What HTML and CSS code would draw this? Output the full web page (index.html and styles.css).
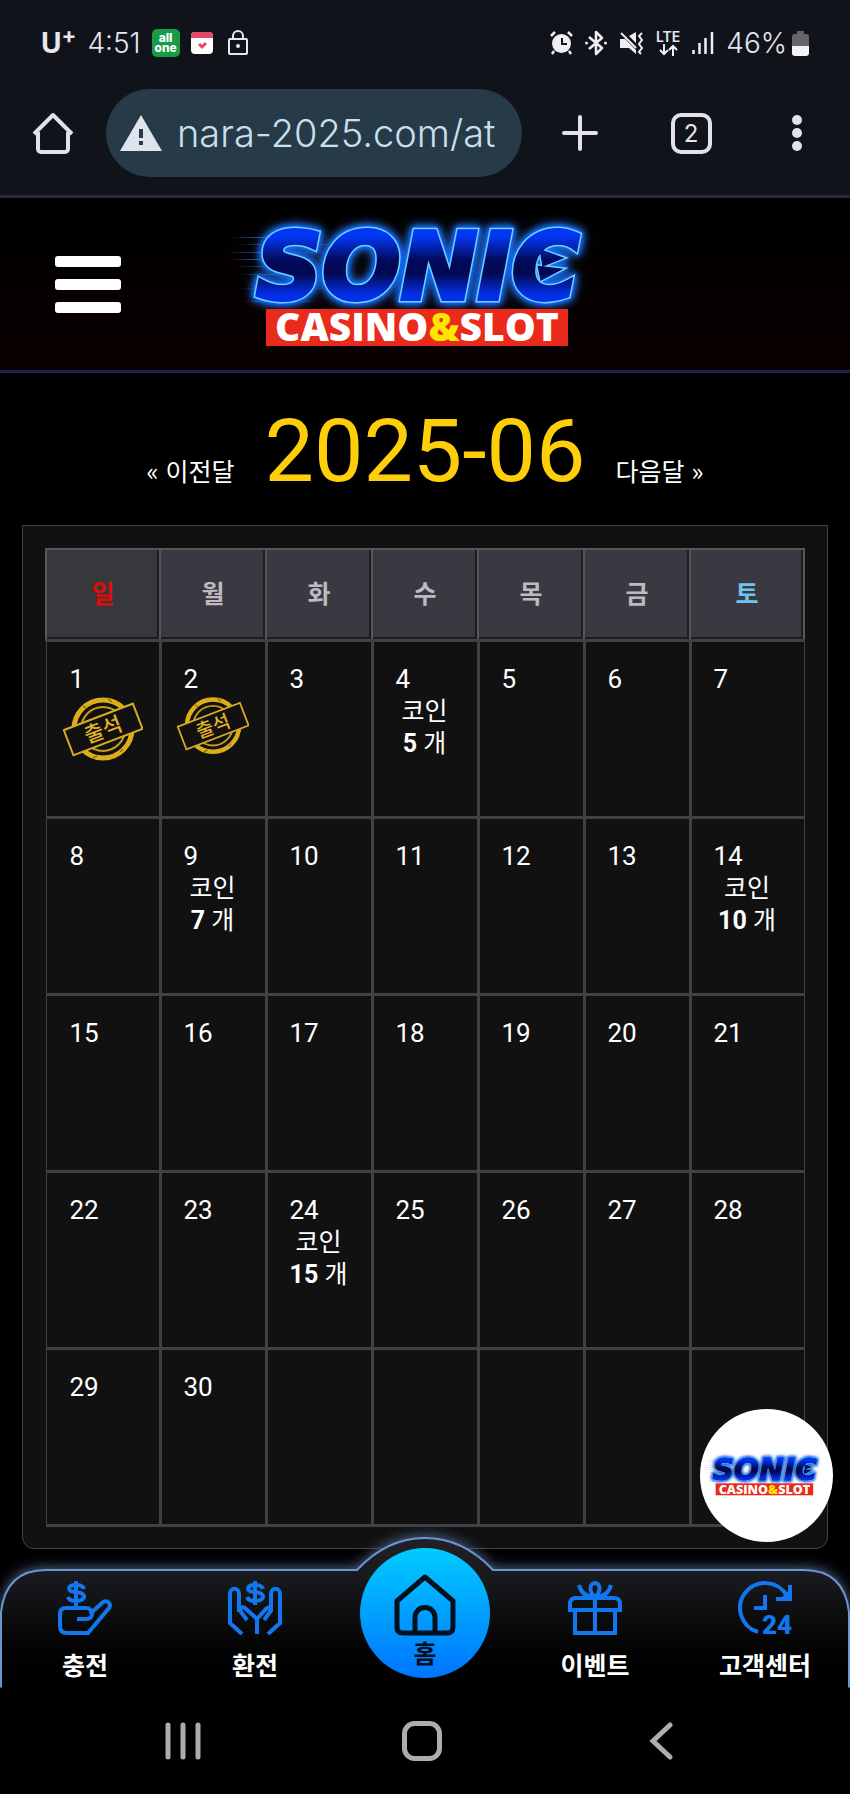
FILE: index.html
```html
<!DOCTYPE html>
<html lang="ko">
  <head>
    <meta charset="UTF-8" />
    <meta name="viewport" content="width=device-width, initial-scale=1.0" />
    <link rel="stylesheet" href="styles.css">
    <title>SONIC CASINO&amp;SLOT</title>
  </head>
  <body>
    <div class="browser">
      <div class="status">
        <div class="status-left">
          <span class="carrier">U<sup>+</sup></span>
          <span class="clock">4:51</span>
          <span class="allone">all<br>one</span>
          <svg class="cal" viewBox="0 0 22 22"><rect width="22" height="22" rx="4" fill="#fff"/><path d="M0 6V4a4 4 0 0 1 4-4h14a4 4 0 0 1 4 4v2z" fill="#e04a66"/><path d="M8 12l3 3 4-4" fill="none" stroke="#e04a66" stroke-width="3"/></svg>
          <svg class="lock" viewBox="0 0 20 26"><rect x="1" y="9" width="18" height="15" rx="1" fill="none" stroke="#e6e6ee" stroke-width="2"/><path d="M5 9V6a5 5 0 0 1 10 0v3" fill="none" stroke="#e6e6ee" stroke-width="2"/><circle cx="10" cy="16" r="2" fill="#e6e6ee"/></svg>
        </div>
        <div class="status-right">
          <svg width="23" height="24" viewBox="0 0 23 24"><circle cx="11.500" cy="12.500" r="9.500" fill="#eeeef4"/><path d="M1 5l4-4M22 5l-4-4M4 20l-2 3M19 20l2 3" stroke="#eeeef4" stroke-width="2.500"/><path d="M12 7v6h5" fill="none" stroke="#11131b" stroke-width="2"/></svg>
          <svg width="22" height="26" viewBox="0 0 22 26"><path d="M4 7l13 11-6 6V2l6 6L4 19" fill="none" stroke="#eeeef4" stroke-width="2.500" stroke-linejoin="round"/><circle cx="1.500" cy="13" r="1.500" fill="#eeeef4"/><circle cx="20.500" cy="13" r="1.500" fill="#eeeef4"/></svg>
          <svg width="25" height="24" viewBox="0 0 25 24"><path d="M1 8h5l11 11v4l-7-6H1zM10 5l7-4v11z" fill="#eeeef4"/><path d="M2 2l15 15" stroke="#eeeef4" stroke-width="2"/><path d="M23 2l-3 3 3 4-3 4 3 4-3 4 2 2" fill="none" stroke="#eeeef4" stroke-width="2"/></svg>
          <span class="lte">LTE<svg width="20" height="12" viewBox="0 0 20 12"><path d="M6 0v10M2 6l4 4 4-4M15 12V2M11 6l4-4 4 4" fill="none" stroke="#eeeef4" stroke-width="2"/></svg></span>
          <svg width="22" height="24" viewBox="0 0 22 24"><path d="M1.500 23v-4M7.500 23V12M13.500 23V7M20 23V1" stroke="#eeeef4" stroke-width="2.500"/></svg>
          <span class="battery">
            <span class="percent">46%</span>
            <svg width="17" height="26" viewBox="0 0 17 26"><path d="M5 1h7v3h2a3 3 0 0 1 3 3v9H0V7a3 3 0 0 1 3-3h2z" fill="#66666a"/><path d="M0 16h17v7a3 3 0 0 1-3 3H3a3 3 0 0 1-3-3z" fill="#f4f4f8"/></svg>
          </span>
        </div>
      </div>

      <div class="toolbar">
        <button class="tool" aria-label="Home"><svg width="42" height="42" viewBox="0 0 42 42"><path d="M2 22L21 3l19 19M6 20v17a3 3 0 0 0 3 3h24a3 3 0 0 0 3-3V20" fill="none" stroke="#e2e1ea" stroke-width="4" stroke-linejoin="round"/></svg></button>
        <label class="address">
          <svg width="42" height="36" viewBox="0 0 42 36"><path d="M21 0l21 36H0z" fill="#dfe3ec"/><path d="M21 14v9M21 26v4" stroke="#263b47" stroke-width="4"/></svg>
          <input type="text" class="url" value="nara-2025.com/at" aria-label="URL">
        </label>
        <button class="tool wide" aria-label="New tab"><svg width="36" height="36" viewBox="0 0 36 36"><path d="M18 2v32M2 18h32" stroke="#e2e1ea" stroke-width="4" stroke-linecap="round"/></svg></button>
        <button class="tool"><span class="tabs">2</span></button>
        <button class="tool" aria-label="Menu"><svg width="10" height="38" viewBox="0 0 10 38"><g fill="#e2e1ea"><circle cx="5" cy="6" r="5"/><circle cx="5" cy="19" r="5"/><circle cx="5" cy="32" r="5"/></g></svg></button>
      </div>
    </div>

    <header class="header">
      <button class="hamburger" aria-label="Menu"><span></span><span></span><span></span></button>
      <a href="#" class="logo">
        <svg viewBox="10 0 390 145">
          <defs>
            <linearGradient id="blue" gradientUnits="userSpaceOnUse" x1="0" y1="18" x2="0" y2="90">
              <stop offset="0.100" stop-color="#0236f0"/>
              <stop offset="0.420" stop-color="#020a5c"/>
              <stop offset="0.600" stop-color="#020850"/>
              <stop offset="0.900" stop-color="#0230e8"/>
            </linearGradient>
            <linearGradient id="speed">
              <stop offset="0" stop-color="#2b58c8" stop-opacity="0"/>
              <stop offset="0.400" stop-color="#3a6ae0"/>
              <stop offset="1" stop-color="#3a6ae0" stop-opacity="0"/>
            </linearGradient>
            <g id="name">
              <text x="36" y="87" class="logo-name">SONIC</text>
              <path d="M322 40l17 6-15 6zM320 56l17 2-15 8z"/>
            </g>
          </defs>
          <g id="brand">
            <g fill="url(#speed)">
              <rect x="10" y="25" width="90" height="1"/>
              <rect x="14" y="32" width="120" height="1"/>
              <rect x="6" y="40" width="110" height="1"/>
              <rect x="8" y="47" width="90" height="1"/>
              <rect x="14" y="54" width="120" height="1"/>
              <rect x="18" y="62" width="90" height="1"/>
              <rect x="20" y="76" width="90" height="1"/>
              <rect x="22" y="89" width="80" height="1"/>
            </g>
            <use href="#name" class="logo-edge"/>
            <use href="#name" class="logo-face"/>
            <rect x="46" y="97" width="302" height="37" fill="#ea2a1b"/>
            <text x="197" y="129" class="logo-sub">CASINO<tspan fill="#ffe600">&amp;</tspan>SLOT</text>
          </g>
        </svg>
      </a>
    </header>

    <main class="attendance">
      <div class="month">
        <a href="#">« 이전달</a>
        <h1>2025-06</h1>
        <a href="#">다음달 »</a>
      </div>

      <div class="panel">
        <table class="calendar">
          <thead>
            <tr><th class="sun">일</th><th>월</th><th>화</th><th>수</th><th>목</th><th>금</th><th class="sat">토</th></tr>
          </thead>
          <tbody>
            <tr>
              <td>1
                <svg class="stamp" viewBox="0 0 80 66">
                  <g id="stamp">
                    <circle cx="40" cy="33" r="29" fill="none" stroke="#dcae1a" stroke-width="5"/>
                    <circle cx="40" cy="33" r="22" fill="none" stroke="#c79d1a" stroke-width="2"/>
                    <path d="M20 10l3 2M45 3l4 3M57 56l3-3M30 62l4-2M14 45l3-1" stroke="#5a4710" stroke-width="1"/>
                    <g transform="rotate(-21 40 33)">
                      <rect x="3" y="20" width="74" height="27" fill="#111112" stroke="#d6ab22" stroke-width="2"/>
                      <text x="40" y="41" class="stamp-text">출석</text>
                    </g>
                  </g>
                </svg>
              </td>
              <td>2
                <svg class="stamp" viewBox="0 0 80 66"><use href="#stamp"/></svg>
              </td>
              <td>3</td>
              <td>4<p class="coin">코인<br><b>5</b> 개</p></td>
              <td>5</td>
              <td>6</td>
              <td>7</td>
            </tr>
            <tr>
              <td>8</td>
              <td>9<p class="coin">코인<br><b>7</b> 개</p></td>
              <td>10</td>
              <td>11</td>
              <td>12</td>
              <td>13</td>
              <td>14<p class="coin">코인<br><b>10</b> 개</p></td>
            </tr>
            <tr><td>15</td><td>16</td><td>17</td><td>18</td><td>19</td><td>20</td><td>21</td></tr>
            <tr>
              <td>22</td>
              <td>23</td>
              <td>24<p class="coin">코인<br><b>15</b> 개</p></td>
              <td>25</td>
              <td>26</td>
              <td>27</td>
              <td>28</td>
            </tr>
            <tr><td>29</td><td>30</td><td></td><td></td><td></td><td></td><td></td></tr>
          </tbody>
        </table>
      </div>

      <a href="#" class="badge" aria-label="SONIC">
        <svg viewBox="10 0 390 145"><use href="#brand"/></svg>
      </a>
    </main>

    <nav class="tabbar">
      <svg class="tabbar-bg" viewBox="0 0 850 152" preserveAspectRatio="none">
        <defs>
          <linearGradient id="bar" x1="0" y1="0" x2="0" y2="1">
            <stop offset="0" stop-color="#202228"/>
            <stop offset="0.300" stop-color="#17181b"/>
            <stop offset="0.750" stop-color="#020203"/>
            <stop offset="1" stop-color="#000"/>
          </linearGradient>
        </defs>
        <path class="bar-shape" d="M1 152V76Q6 34 46 34H357Q387 2 425 2T493 34H804Q844 34 849 76V152" fill="url(#bar)" stroke="#6d94cf" stroke-width="2"/>
      </svg>
      <a href="#" class="tab">
        <svg width="54" height="54" viewBox="0 0 54 54"><path d="M26 8c-1-4-5-4-8-4-9 0-9 7-1 7 12 0 12 9 1 9-4 0-7-1-8-4M18 0v26M19 38h9c9 0 7-11 0-11H8q-6 0-6 6v12q0 7 7 7h21L51 27c3-5-3-9-7-5L32 33" fill="none" stroke="#1277ee" stroke-width="4"/></svg>
        충전
      </a>
      <a href="#" class="tab">
        <svg width="54" height="54" viewBox="0 0 54 54"><path d="M35 8c-1-4-5-4-8-4-9 0-9 7-1 7 12 0 12 9 1 9-4 0-7-1-8-4M27 0v24M29 53V38L17 27c-3-2-6 1-4 4l6 8M29 38l9-10c3-3 6 0 4 3l-6 8M14 53L2 42V13c0-7 9-7 9 0v18M40 53l12-11V13c0-7-9-7-9 0v18" fill="none" stroke="#1277ee" stroke-width="4"/></svg>
        환전
      </a>
      <a href="#" class="tab home">
        <svg width="62" height="64" viewBox="0 0 62 64"><path d="M3 28L31 4l28 24v26q0 6-6 6H9q-6 0-6-6zM21 60V45c0-14 20-14 20 0v15" fill="none" stroke="#04101c" stroke-width="5" stroke-linejoin="round"/></svg>
        홈
      </a>
      <a href="#" class="tab">
        <svg width="54" height="54" viewBox="0 0 54 54"><path d="M7 30v22h40V30M2 29v-6q0-6 6-6h38q6 0 6 6v6zM27 17v35M27 16c-7-6-5-14 0-14s7 8 0 14zM27 16c-9 0-14-4-16-12M27 16c9 0 14-4 16-12" fill="none" stroke="#1277ee" stroke-width="4"/></svg>
        이벤트
      </a>
      <a href="#" class="tab">
        <svg width="54" height="54" viewBox="0 0 54 54"><path d="M20 51A25 25 0 1 1 49 15M52 4v14H38M27 14v13H16" fill="none" stroke="#1277ee" stroke-width="4"/><path d="M52 8v10H42z" fill="#1277ee"/><text x="24" y="53" class="hours">24</text></svg>
        고객센터
      </a>
    </nav>

    <div class="system">
      <button aria-label="Recents"><svg width="36" height="38" viewBox="0 0 36 38"><path d="M3 3v32M18 3v32M33 3v32" stroke="#aeacb1" stroke-width="5" stroke-linecap="round"/></svg></button>
      <button aria-label="Home"><svg width="40" height="40" viewBox="0 0 40 40"><rect x="2.500" y="2.500" width="35" height="35" rx="10" fill="none" stroke="#aeacb1" stroke-width="5"/></svg></button>
      <button aria-label="Back"><svg width="24" height="38" viewBox="0 0 24 38"><path d="M21 3L4 19l17 16" fill="none" stroke="#aeacb1" stroke-width="5" stroke-linecap="round"/></svg></button>
    </div>
  </body>
</html>
```

FILE: styles.css
```css
* {
  margin: 0;
  padding: 0;
  box-sizing: border-box;
}

body {
  background-color: #000;
  color: #fff;
  font-family: Roboto, "Noto Sans CJK KR", sans-serif;
}
a {
  color: inherit;
  text-decoration: none;
}
button {
  background: none;
  border: 0;
  color: inherit;
}
svg {
  display: block;
}

/* browser bars */
.browser {
  background-color: #11131b;
  border-bottom: 3px solid #2b2c31;
  font-family: Inter, sans-serif;
  color: #e6e6ee;
}
.status {
  display: flex;
  justify-content: space-between;
  align-items: center;
  height: 86px;
  padding: 0 41px;
}
.status-left,
.status-right,
.battery {
  display: flex;
  align-items: center;
}
.status-left {
  gap: 11px;
}
.status-right {
  gap: 12px;
}
.battery {
  gap: 5px;
}
.carrier {
  font-size: 28px;
  line-height: 30px;
  font-weight: 700;
}
.carrier sup {
  font-size: 22px;
  line-height: 10px;
}
.clock,
.percent {
  font-size: 28px;
  line-height: 30px;
  font-weight: 300;
}
.allone {
  width: 28px;
  height: 28px;
  padding: 4px 0;
  border-radius: 5px;
  background-color: #199a45;
  color: #fff;
  font-size: 12px;
  line-height: 10px;
  font-weight: 800;
  text-align: center;
}
.cal {
  width: 22px;
  margin-right: 4px;
}
.lock {
  width: 20px;
}
.lte {
  font-size: 14px;
  line-height: 14px;
  font-weight: 600;
}
.lte svg {
  margin: 0 auto;
}
.toolbar {
  display: flex;
  align-items: center;
  height: 109px;
  padding-bottom: 15px;
}
.tool {
  display: flex;
  justify-content: center;
  align-items: center;
  width: 106px;
  height: 88px;
}
.wide {
  width: 116px;
}
.tabs {
  width: 41px;
  height: 41px;
  border: 4px solid #e2e1ea;
  border-radius: 10px;
  font-family: Inter, sans-serif;
  font-size: 24px;
  line-height: 33px;
}
.address {
  flex: 1;
  display: flex;
  align-items: center;
  gap: 15px;
  min-width: 0;
  height: 88px;
  padding: 0 14px;
  border-radius: 44px;
  background-color: #263b47;
}
.address svg {
  flex: none;
}
.url {
  flex: 1;
  min-width: 0;
  border: 0;
  outline: 0;
  background: none;
  color: #c9dfee;
  font-family: Inter, sans-serif;
  font-size: 38px;
  font-weight: 300;
}

/* site header */
.header {
  display: grid;
  grid-template-columns: 1fr 390px 1fr;
  align-items: center;
  height: 175px;
  border-bottom: 3px solid #1b2152;
  background: linear-gradient(#000, #0a0000);
}
.hamburger {
  display: grid;
  gap: 12px;
  width: 66px;
  margin-left: 55px;
}
.hamburger span {
  height: 11px;
  border-radius: 3px;
  background-color: #fff;
}
.logo svg,
.badge svg {
  overflow: visible;
}
.logo-name {
  font-family: "DejaVu Sans", sans-serif;
  font-size: 92px;
  font-weight: 700;
  font-style: italic;
}
.logo-edge {
  fill: #6fd0ff;
  stroke: #6fd0ff;
  stroke-width: 7px;
  filter: drop-shadow(0 0 2px #0a6cff) drop-shadow(0 0 3px #0a6cff) drop-shadow(0 0 5px #2a5dbb);
}
.logo-face {
  fill: url(#blue);
  stroke: url(#blue);
  stroke-width: 4px;
}
.logo-sub {
  font-family: "Open Sans", sans-serif;
  font-size: 39px;
  font-weight: 800;
  fill: #fff;
  text-anchor: middle;
}

/* calendar */
.attendance {
  position: relative;
  padding: 0 22px;
}
.month {
  display: flex;
  justify-content: center;
  align-items: baseline;
  gap: 30px;
  padding-top: 3px;
  font-family: "Noto Sans CJK KR", sans-serif;
  font-size: 25px;
}
.month h1 {
  color: #ffce0a;
  font-family: Roboto, sans-serif;
  font-size: 88px;
  line-height: 149px;
  font-weight: 400;
}
.panel {
  padding: 22px 22px 21px;
  border: 1px solid #444446;
  border-radius: 0 0 12px 12px;
  background-color: #111112;
}
.calendar {
  width: 100%;
  table-layout: fixed;
  border-collapse: collapse;
}
.calendar th {
  height: 91px;
  padding-bottom: 5px;
  border: 2px solid #56565b;
  background-color: #3a3841;
  box-shadow: inset -2px -2px 0 #1d1d20;
  color: #bdbac2;
  font-size: 25px;
  font-weight: 700;
}
.calendar th:first-child {
  width: 114px;
}
.calendar th:last-child {
  width: 114px;
}
.calendar .sun {
  background-color: #38383c;
  color: #e00b0b;
}
.calendar .sat {
  color: #6cc4f0;
}
.calendar td {
  height: 177px;
  padding: 21px 16px 0 22px;
  border: 3px solid #414143;
  vertical-align: top;
  font-size: 26px;
  line-height: 32px;
}
.calendar td:first-child {
  padding-left: 23px;
  border-left-width: 1px;
}
.calendar td:last-child {
  border-right-width: 1px;
}
.coin {
  margin: 1px 0 0 -7px;
  font-size: 25px;
  text-align: center;
  white-space: nowrap;
}
.stamp {
  width: calc(100% + 7px);
  margin: 1px 0 0 -7px;
}
.stamp-text {
  font-family: "Noto Sans CJK KR", sans-serif;
  font-size: 21px;
  font-weight: 500;
  fill: #e0b422;
  text-anchor: middle;
}
.badge {
  position: absolute;
  right: 17px;
  bottom: 7px;
  display: flex;
  justify-content: center;
  align-items: center;
  width: 133px;
  height: 133px;
  border-radius: 50%;
  background-color: #fff;
}
.badge svg {
  width: 126px;
}

/* bottom tabs */
.tabbar {
  position: relative;
  display: grid;
  grid-template-columns: repeat(5, 1fr);
  height: 139px;
  padding-top: 32px;
}
.tabbar-bg {
  position: absolute;
  left: 0;
  bottom: 0;
  width: 100%;
  height: 152px;
  overflow: visible;
  clip-path: inset(-20px 0 0 0);
}
.bar-shape {
  filter: drop-shadow(0 -2px 6px #43597d);
}
.tab {
  position: relative;
  display: flex;
  flex-direction: column;
  align-items: center;
  gap: 14px;
  font-size: 25px;
  line-height: 36px;
  font-weight: 700;
}
.hours {
  font-family: Roboto, sans-serif;
  font-size: 26px;
  font-weight: 900;
  fill: #1277ee;
}
.home {
  justify-self: center;
  gap: 0;
  width: 130px;
  height: 130px;
  margin-top: -33px;
  padding-top: 25px;
  border-radius: 50%;
  background: linear-gradient(#00ccff, #0074ff);
  color: #04101c;
}

/* android buttons */
.system {
  display: grid;
  grid-template-columns: repeat(3, 1fr);
  height: 106px;
  padding: 0 70px 0 64px;
}
.system button {
  display: flex;
  justify-content: center;
  align-items: center;
}
```
